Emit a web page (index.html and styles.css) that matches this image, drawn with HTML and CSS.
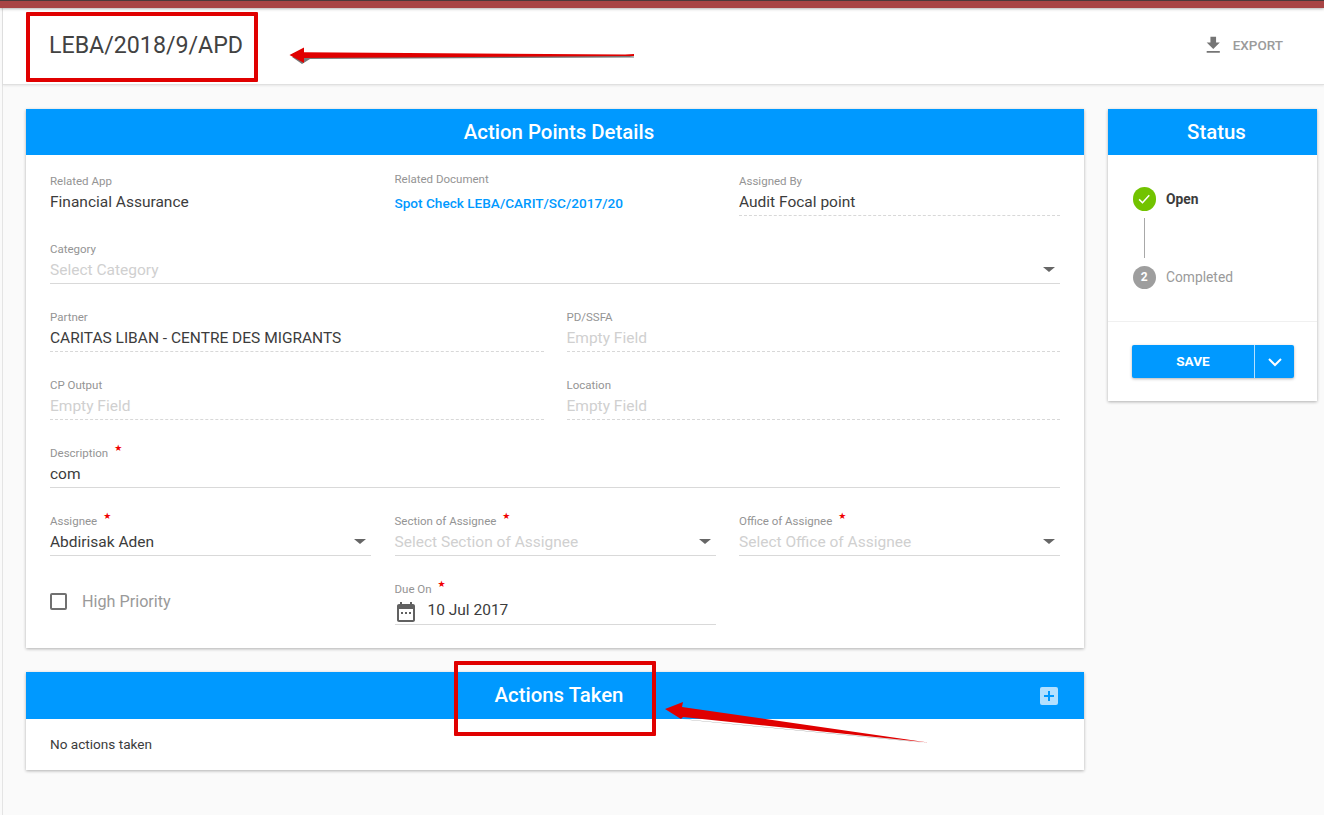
FILE: index.html
```html
<!DOCTYPE html>
<html lang="en">
<head>
  <meta charset="UTF-8" />
  <meta name="viewport" content="width=device-width, initial-scale=1.0"/>
  <title>LEBA/2018/9/APD – Action Points</title>
  <link rel="stylesheet" href="styles.css">
</head>
<body>
  <div class="top-stripe"></div>

  <div class="app">
    <header class="page-header">
      <h1>LEBA/2018/9/APD</h1>
      <div class="export">
        <svg class="export-icon" viewBox="0 0 24 24"><path d="M19 9h-4V3H9v6H5l7 7 7-7zM5 18v2h14v-2H5z"/></svg>
        <span>EXPORT</span>
      </div>
    </header>

    <div class="content">
      <main class="main-col">
        <section class="card">
          <h2 class="card-title">Action Points Details</h2>
          <div class="card-body">
            <div class="row cols-3">
              <div class="field plain">
                <label>Related App</label>
                <div class="value">Financial Assurance</div>
              </div>
              <div class="field plain doc">
                <label>Related Document</label>
                <a class="value link">Spot Check LEBA/CARIT/SC/2017/20</a>
              </div>
              <div class="field dashed">
                <label>Assigned By</label>
                <div class="value">Audit Focal point</div>
              </div>
            </div>

            <div class="row">
              <div class="field solid select">
                <label>Category</label>
                <div class="value empty">Select Category</div>
                <i class="caret"></i>
              </div>
            </div>

            <div class="row cols-2">
              <div class="field dashed">
                <label>Partner</label>
                <div class="value">CARITAS LIBAN - CENTRE DES MIGRANTS</div>
              </div>
              <div class="field dashed">
                <label>PD/SSFA</label>
                <div class="value empty">Empty Field</div>
              </div>
            </div>

            <div class="row cols-2">
              <div class="field dashed">
                <label>CP Output</label>
                <div class="value empty">Empty Field</div>
              </div>
              <div class="field dashed">
                <label>Location</label>
                <div class="value empty">Empty Field</div>
              </div>
            </div>

            <div class="row">
              <div class="field solid">
                <label class="required">Description</label>
                <div class="value">com</div>
              </div>
            </div>

            <div class="row cols-3">
              <div class="field solid select">
                <label class="required">Assignee</label>
                <div class="value">Abdirisak Aden</div>
                <i class="caret"></i>
              </div>
              <div class="field solid select">
                <label class="required">Section of Assignee</label>
                <div class="value empty">Select Section of Assignee</div>
                <i class="caret"></i>
              </div>
              <div class="field solid select">
                <label class="required">Office of Assignee</label>
                <div class="value empty">Select Office of Assignee</div>
                <i class="caret"></i>
              </div>
            </div>

            <div class="row cols-3 last">
              <div class="priority">
                <span class="checkbox"></span>
                <span>High Priority</span>
              </div>
              <div class="field solid date">
                <label class="required">Due On</label>
                <div class="value">
                  <svg class="date-icon" viewBox="0 0 24 24"><path d="M19 4h-1V2h-2v2H8V2H6v2H5c-1.100 0-2 .9-2 2v14c0 1.100.9 2 2 2h14c1.100 0 2-.9 2-2V6c0-1.100-.9-2-2-2zm0 16H5V9h14v11zM7 12h2v2H7zm4 0h2v2h-2zm4 0h2v2h-2z"/></svg>
                  10 Jul 2017
                </div>
              </div>
            </div>
          </div>
        </section>

        <section class="card actions">
          <h2 class="card-title">
            Actions Taken
            <svg class="add-icon" viewBox="0 0 18 18"><rect width="18" height="18" rx="2" fill="#b3e0ff"/><path d="M8 4h2v4h4v2h-4v4H8v-4H4V8h4z" fill="#0099ff"/></svg>
          </h2>
          <div class="no-actions">No actions taken</div>
        </section>
      </main>

      <aside class="card status">
        <h2 class="card-title">Status</h2>
        <div class="steps">
          <div class="step done">
            <span class="step-dot">
              <svg viewBox="0 0 24 24"><path d="M5.500 12.500l4.500 4.500 9-10" fill="none" stroke="#fff" stroke-width="2"/></svg>
            </span>
            <span>Open</span>
          </div>
          <div class="step-line"></div>
          <div class="step">
            <span class="step-dot">2</span>
            <span>Completed</span>
          </div>
        </div>
        <div class="status-actions">
          <div class="save-btn">
            <span class="save-label">SAVE</span>
            <span class="save-more">
              <svg viewBox="0 0 24 24"><path d="M6 9l6 6 6-6" fill="none" stroke="#fff" stroke-width="2"/></svg>
            </span>
          </div>
        </div>
      </aside>
    </div>
  </div>

  <!-- annotations painted on top of the screenshot -->
  <div class="note-box note-title"></div>
  <div class="note-box note-actions"></div>
  <svg class="note-arrows" viewBox="0 0 1324 815">
    <path class="arrow-shade" d="M634 56.500V57.500L310 59 302 64 292 57 625 55.500z"/>
    <path class="arrow-red" d="M634 54V56H625L304 58V63L289.500 55 304 47.500V52.300L625 54.500z"/>
    <path class="arrow-shade" d="M928 743L690 720 682 719 900 740z"/>
    <path class="arrow-red" d="M928 742.500L683 717 681 719 665 709 683 702 682 707z"/>
  </svg>
</body>
</html>
```

FILE: styles.css
```css
* {
  box-sizing: border-box;
}

html, body {
  margin: 0;
  height: 815px;
  overflow: hidden;
}

body {
  background: #fafafa;
  color: #3c3c3c;
  font-family: Roboto, "Liberation Sans", sans-serif;
  font-size: 16px;
}

.top-stripe {
  height: 8px;
  background: #a84444;
  border-top: 1px solid #4a3a3a;
  box-shadow: 0 1px 3px rgba(0, 0, 0, 0.3);
  position: relative;
  z-index: 2;
}

.app {
  margin-left: 2px;
  border-left: 1px solid #e4e4e4;
  height: 807px;
}

/* header */
.page-header {
  display: flex;
  justify-content: space-between;
  align-items: center;
  height: 77px;
  padding: 0 41px 1px 46px;
  background: #fff;
  border-bottom: 1px solid #e0e0e0;
  box-shadow: 0 1px 2px rgba(0, 0, 0, 0.08);
}

.page-header h1 {
  margin: 0 0 1px;
  font-size: 23.200px;
  font-weight: 400;
  color: #424242;
}

.export {
  display: flex;
  align-items: center;
  gap: 8px;
  font-size: 13.500px;
  font-weight: 500;
  color: #9b9b9b;
  margin-bottom: 1px;
}

.export-icon {
  width: 22.500px;
  height: 22.500px;
  fill: #757575;
}

/* columns */
.content {
  display: flex;
  align-items: flex-start;
  gap: 24px;
  padding: 24px 7px 0 23px;
}

.main-col {
  width: 1058px;
}

.card {
  background: #fff;
  box-shadow: 0 1px 3px rgba(0, 0, 0, 0.3);
}

.card-title {
  position: relative;
  margin: 0;
  height: 46px;
  padding-left: 8px;
  line-height: 46px;
  text-align: center;
  background: #0099ff;
  color: #fff;
  font-size: 20.400px;
  font-weight: 500;
}

.card-body {
  padding: 19px 24px 24px;
}

/* form rows */
.row {
  display: grid;
  column-gap: 23.500px;
  height: 68px;
}

.row.cols-3 {
  grid-template-columns: repeat(3, 1fr);
}

.row.cols-2 {
  grid-template-columns: repeat(2, 1fr);
  column-gap: 23px;
}

.row.last {
  height: 42px;
}

.field {
  position: relative;
  height: 42px;
}

.field label {
  display: block;
  height: 16px;
  line-height: 15px;
  font-size: 11.500px;
  color: #949494;
}

.value {
  display: block;
  height: 26px;
  line-height: 25px;
  font-size: 15.500px;
  color: #3c3c3c;
}

.value.empty {
  color: #d0d0d0;
}

.field.dashed {
  border-bottom: 1px dashed #d8d8d8;
}

.field.solid {
  border-bottom: 1px solid #d9d9d9;
}

.field.plain {
  border-bottom: 0;
}

.field.doc {
  margin-top: -2px;
}

.value.link {
  margin-top: 3px;
  line-height: 25px;
  font-size: 13.600px;
  font-weight: 500;
  color: #0099ff;
}

.required::after {
  content: "★";
  font-family: "DejaVu Sans", sans-serif;
  color: #f00000;
  font-size: 9px;
  line-height: 0;
  margin-left: 6px;
  vertical-align: 6px;
}

.caret {
  position: absolute;
  right: 5px;
  bottom: 11px;
  border-left: 6px solid transparent;
  border-right: 6px solid transparent;
  border-top: 5px solid #666;
}

/* last row */
.priority {
  display: flex;
  align-items: center;
  gap: 15px;
  height: 32px;
  margin-top: 3px;
  font-size: 16.200px;
  color: #9a9a9a;
}

.checkbox {
  width: 17px;
  height: 17px;
  border: 2px solid #707070;
  border-radius: 2px;
}

.field.date {
  height: 43px;
}

.field.date .value {
  display: flex;
  align-items: center;
  gap: 10px;
  height: 27px;
  padding-bottom: 3px;
}

.date-icon {
  flex: none;
  width: 24px;
  height: 24px;
  fill: #616161;
  margin: 0 0 -3px -1px;
}

/* actions card */
.actions {
  margin-top: 24px;
}

.actions .card-title {
  height: 47px;
  line-height: 47px;
}

.add-icon {
  position: absolute;
  right: 26px;
  top: 15px;
  width: 18px;
  height: 18px;
}

.no-actions {
  height: 51px;
  padding: 17px 24px 0;
  font-size: 13.600px;
  line-height: 16px;
}

/* status card */
.status {
  width: 209px;
}

.steps {
  height: 167px;
  padding: 32px 24px 0 24.500px;
  border-bottom: 1px solid #f0f0f0;
}

.step {
  display: flex;
  align-items: center;
  gap: 10px;
  font-size: 13.800px;
  color: #9a9a9a;
}

.step.done {
  color: #3c3c3c;
  font-weight: 700;
}

.step-dot {
  display: flex;
  align-items: center;
  justify-content: center;
  width: 23.500px;
  height: 23.500px;
  border-radius: 50%;
  background: #9e9e9e;
  color: #fff;
  font-size: 12px;
  font-weight: 700;
}

.step.done .step-dot {
  background: #72c300;
}

.step-dot svg {
  width: 18px;
  height: 18px;
}

.step-line {
  width: 1px;
  height: 40px;
  margin: 7px 0 8px 11px;
  background: #a8a8a8;
}

.status-actions {
  padding: 23px 23px 23px 24px;
}

.save-btn {
  display: flex;
  height: 33px;
  background: #0099ff;
  color: #fff;
  border-radius: 2px;
  box-shadow: 0 1px 3px rgba(0, 0, 0, 0.3);
  font-size: 13.600px;
  font-weight: 700;
}

.save-label {
  flex: 1;
  line-height: 33px;
  text-align: center;
}

.save-more {
  display: flex;
  align-items: center;
  justify-content: center;
  width: 40px;
  border-left: 1px solid #b3e0ff;
}

.save-more svg {
  width: 24px;
  height: 24px;
}

/* red annotations */
.note-box {
  position: absolute;
  border: 4px solid #e00000;
  border-radius: 1px;
  z-index: 3;
}

.note-title {
  left: 26px;
  top: 12px;
  width: 232px;
  height: 70px;
}

.note-actions {
  left: 454px;
  top: 661px;
  width: 202px;
  height: 75px;
}

.note-arrows {
  position: absolute;
  left: 0;
  top: 0;
  width: 1324px;
  height: 815px;
  z-index: 3;
}

.arrow-red {
  fill: #e00000;
}

.arrow-shade {
  fill: #777;
}
```
